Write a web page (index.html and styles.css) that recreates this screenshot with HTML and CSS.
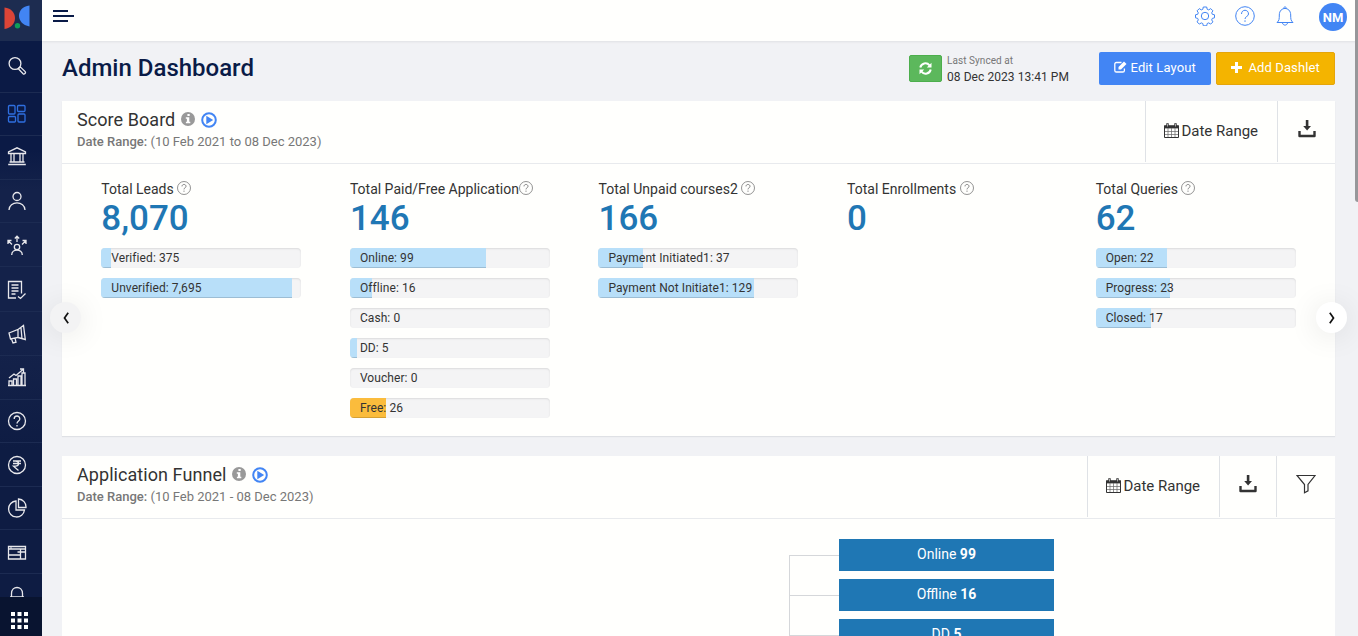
FILE: index.html
```html
<!DOCTYPE html>
<html lang="en">
  <head>
    <meta charset="utf-8">
    <meta name="viewport" content="width=device-width, initial-scale=1">
    <link rel="stylesheet" href="styles.css">
    <title>Admin Dashboard</title>
  </head>

  <body>
    <!-- Shared icons -->
    <svg class="sprite">
      <symbol id="info" viewBox="0 0 14 14">
        <circle cx="7" cy="7" r="7" fill="#999"/>
        <path d="M6.4 2.1h2.3v2H6.4zM4.8 5.3h3.5v4.5h1v1.5H4.9V9.800h1V6.800H4.8z" fill="#fff"/>
      </symbol>
      <symbol id="play" viewBox="0 0 16 16">
        <circle cx="8" cy="8" r="6.8" fill="none" stroke="#4285f4" stroke-width="2"/>
        <path d="M5.3 3.8L12.2 8l-6.9 4.2z" fill="#4285f4"/>
      </symbol>
      <symbol id="help" viewBox="0 0 14 14">
        <circle cx="7" cy="7" r="6.500" fill="none" stroke="#777" stroke-width=".8"/>
        <path d="M5 5.400c0-2.600 4-2.600 4 0C9 6.800 7 6.700 7 8.400M7 9.600v1.200" fill="none" stroke="#777" stroke-width=".9"/>
      </symbol>
      <symbol id="calendar" viewBox="0 0 15 15">
        <path d="M.5 3h14v11.5H.5z" fill="none" stroke="#333"/>
        <path d="M0 2.4h15v3H0z" fill="#333"/>
        <path d="M3.5.3v3.5M11.5.3v3.5" stroke="#333" stroke-width="2.4"/>
        <path d="M3.5 1v2.5M11.5 1v2.5" stroke="#ddd" stroke-width=".7"/>
        <path d="M4 5v9M7.5 5v9M11 5v9M1 8.5h13M1 11.5h13" stroke="#666" stroke-width=".7"/>
      </symbol>
      <symbol id="download" viewBox="0 0 18 18">
        <path d="M1.5 11v5h15v-5" fill="none" stroke="#333" stroke-width="2.4" stroke-linejoin="round"/>
        <path d="M7.8 0h2.6v6h2.6l-3.9 4.6L5.2 6h2.6z" fill="#333"/>
      </symbol>
    </svg>

    <aside class="sidebar">
      <div class="logo">
        <svg width="26" height="25" viewBox="0 0 26 25">
          <path d="M.5 2.500C14.500 4 14.500 22 .5 24z" fill="#db4437"/>
          <path d="M25.500.5C11.500 2 11.500 19 25.500 21.500z" fill="#4285f4"/>
          <circle cx="13.500" cy="20.700" r="2.700" fill="#0f9d58"/>
        </svg>
      </div>
      <nav class="menu">
        <a class="search"><svg class="icon" viewBox="0 0 20 20"><circle cx="8" cy="7.500" r="5.900"/><path d="M12 12l1.200-1.100 5 4.700c1.100 1.200-.9 3.200-2.100 2.100l-4.800-5z"/></svg></a>
        <a class="active"><svg class="icon" viewBox="0 0 20 20"><rect x="1.500" y="1.500" width="6.500" height="8.500" rx="1"/><rect x="10.500" y="1.500" width="7.500" height="6" rx="1"/><rect x="1.500" y="12.500" width="7" height="5.500" rx="1"/><rect x="11" y="10" width="7" height="8" rx="1"/></svg></a>
        <a><svg class="icon" viewBox="0 0 20 20"><path d="M1.500 6.500V5L10 .8 18.500 5v1.500zM4 6.500V15M7 6.500V15M13 6.500V15M16 6.500V15M2.500 15h15M1.200 17.500h17.600"/></svg></a>
        <a><svg class="icon" viewBox="0 0 20 20"><circle cx="10" cy="5.500" r="4"/><path d="M2 19c0-9.500 16-9.500 16 0"/></svg></a>
        <a><svg class="icon" viewBox="0 0 20 20"><circle cx="10" cy="12" r="2.700"/><path d="M4.700 20c0-6.500 10.600-6.500 10.600 0M10 7V1.500M7.800 3.500L10 1.200l2.200 2.300M5 9.500L1 5.500M1 9V5.500h3.500M15 9.500l4-4M15.500 5.500H19V9"/></svg></a>
        <a class="lower"><svg class="icon" viewBox="0 0 20 20"><path d="M9 18H1.500V1.500h13v12M4.500 5h7M4.500 8h7M4.500 11h7M4.500 14h4M11 16.500l2.500 2 5-5"/></svg></a>
        <a><svg class="icon" viewBox="0 0 20 20"><path d="M2 9l9-3.500v8L3.500 15zM11 5.500L16.500 1.500l1.800 14L11 13.500M14 4l1 10.500M4.500 15l1.500 4 3-.8L8 14"/></svg></a>
        <a><svg class="icon" viewBox="0 0 20 20"><path d="M2 18v-4h3v4M6.500 18v-6h3v6M11 18V9h3v9M15 18V6h3v12M1 18.500h18M2 11l5-4 2 1.500 7-6M13 2h3.500v3.500"/></svg></a>
        <a><svg class="icon" viewBox="0 0 20 20"><circle cx="10" cy="10" r="8.500"/><path d="M7.200 8c0-4 5.600-4 5.600 0 0 2-2.800 2-2.800 4.500M10 14v1.500"/></svg></a>
        <a><svg class="icon" viewBox="0 0 20 20"><circle cx="10" cy="10" r="8.500"/><path d="M6 6h8M6 8.500h8M6 6h2.500c4 0 4 5.200 0 5.200H6.500l5 4.300"/></svg></a>
        <a><svg class="icon" viewBox="0 0 20 20"><path d="M9 3a8 8 0 1 0 8.500 9H9zM11.500 1v8.500H19A8 8 0 0 0 11.500 1z"/></svg></a>
        <a><svg class="icon" viewBox="0 0 20 20"><path d="M1.500 4.500h17v12.500h-17zM1.500 7h17M13.500 7v10M1.500 13h12M3.500 5.800h1M10.500 10h8"/></svg></a>
        <a><svg class="icon" viewBox="0 0 20 20"><path d="M4.500 12V8.500c0-8 11-8 11 0V12M3 12h14"/></svg></a>
      </nav>
      <div class="apps">
        <svg width="17" height="17" viewBox="0 0 17 17"><path d="M0 2h17M0 8.500h17M0 15h17" stroke="#fff" stroke-width="4" stroke-dasharray="4 2.500"/></svg>
      </div>
    </aside>

    <div class="page">
      <header class="topbar">
        <svg class="burger" width="22" height="12" viewBox="0 0 22 12"><path d="M0 1h15M0 6h21M0 11h15" stroke="#0a1b47" stroke-width="2"/></svg>
        <div class="tools">
          <svg class="tool" viewBox="0 0 20 20"><circle cx="10" cy="10" r="3.700"/><path d="M8.300 1h3.400l.5 2.300 1.500.6 2-1.300 2.200 2.200-1.200 2 .6 1.500 2.200.5v3l-2.200.6-.6 1.500 1.200 2-2.200 2.200-2-1.200-1.500.6-.5 2.300H8.300l-.5-2.300-1.500-.6-2 1.200-2.200-2.200 1.200-2-.6-1.500-2.200-.6v-3l2.200-.5.6-1.500-1.200-2 2.200-2.200 2 1.300 1.500-.6z"/></svg>
          <svg class="tool" viewBox="0 0 20 20"><circle cx="10" cy="10" r="9.300"/><path d="M6.500 8c0-5 7-5 7 0 0 2.500-3.500 2.300-3.500 5M10 14.300v1.600"/></svg>
          <svg class="tool" viewBox="0 0 20 20"><path d="M8.700 2.500c0-2.200 2.600-2.200 2.600 0M2 16.500c2.300-2 2.300-3.500 2.300-7.500 0-8.700 11.400-8.700 11.400 0 0 4 0 5.500 2.300 7.500zM7.500 17c.5 2.800 4.500 2.800 5 0"/></svg>
          <span class="avatar">NM</span>
        </div>
      </header>

      <div class="titlebar">
        <h1>Admin Dashboard</h1>
        <button class="sync">
          <svg width="13" height="13" viewBox="0 0 13 13"><path d="M1.300 5.500A5.200 5.200 0 0 1 10.500 3.300M11.700 7.500A5.200 5.200 0 0 1 2.500 9.700" fill="none" stroke="#fff" stroke-width="2"/><path d="M12.500.8v4.700H7.800zM.5 12.200V7.500h4.700z" fill="#fff"/></svg>
        </button>
        <div class="synced">
          <small>Last Synced at</small>
          <span>08 Dec 2023 13:41 PM</span>
        </div>
        <button class="btn blue">
          <svg width="13" height="12" viewBox="0 0 13 12"><path d="M7.500 1.500H2.400Q.8 1.500.8 3v6.400q0 1.600 1.600 1.600h6.400q1.600 0 1.600-1.600V7.500" fill="none" stroke="#fff" stroke-width="1.300"/><path d="M4.500 6L10 .5 12.500 3 7 8.500H4.500z" fill="#fff"/></svg>
          Edit Layout
        </button>
        <button class="btn yellow">
          <svg width="11" height="11" viewBox="0 0 11 11"><path d="M5.500 0v11M0 5.500h11" stroke="#fff" stroke-width="3"/></svg>
          Add Dashlet
        </button>
      </div>

      <section class="card scoreboard">
        <div class="cardHead">
          <div class="cardTitle">
            <h2>Score Board <svg class="info"><use href="#info"/></svg><svg class="play"><use href="#play"/></svg></h2>
            <p><b>Date Range:</b> (10 Feb 2021 to 08 Dec 2023)</p>
          </div>
          <div class="range"><svg class="cal"><use href="#calendar"/></svg>Date Range</div>
          <div class="action"><svg class="dl"><use href="#download"/></svg></div>
        </div>
        <div class="scores">
          <div class="score">
            <h3>Total Leads <svg><use href="#help"/></svg></h3>
            <strong>8,070</strong>
            <div class="bar"><i style="width: 5%"></i><span>Verified: 375</span></div>
            <div class="bar"><i style="width: 95.5%"></i><span>Unverified: 7,695</span></div>
          </div>
          <div class="score">
            <h3>Total Paid/Free Application<svg><use href="#help"/></svg></h3>
            <strong>146</strong>
            <div class="bar"><i style="width: 68%"></i><span>Online: 99</span></div>
            <div class="bar"><i style="width: 11%"></i><span>Offline: 16</span></div>
            <div class="bar"><span>Cash: 0</span></div>
            <div class="bar"><i style="width: 3.5%"></i><span>DD: 5</span></div>
            <div class="bar"><span>Voucher: 0</span></div>
            <div class="bar free"><i style="width: 18%"></i><span>Free: 26</span></div>
          </div>
          <div class="score">
            <h3>Total Unpaid courses2 <svg><use href="#help"/></svg></h3>
            <strong>166</strong>
            <div class="bar"><i style="width: 22.5%"></i><span>Payment Initiated1: 37</span></div>
            <div class="bar"><i style="width: 78%"></i><span>Payment Not Initiate1: 129</span></div>
          </div>
          <div class="score">
            <h3>Total Enrollments <svg><use href="#help"/></svg></h3>
            <strong>0</strong>
          </div>
          <div class="score">
            <h3>Total Queries <svg><use href="#help"/></svg></h3>
            <strong>62</strong>
            <div class="bar"><i style="width: 35.5%"></i><span>Open: 22</span></div>
            <div class="bar"><i style="width: 37%"></i><span>Progress: 23</span></div>
            <div class="bar"><i style="width: 27.5%"></i><span>Closed: 17</span></div>
          </div>
        </div>
        <button class="arrow prev"><svg width="8" height="12" viewBox="0 0 8 12"><path d="M6.200.8L2.500 6l3.700 5.200" fill="none" stroke="#111" stroke-width="1.700"/></svg></button>
        <button class="arrow next"><svg width="8" height="12" viewBox="0 0 8 12"><path d="M1.800.8L5.500 6l-3.700 5.200" fill="none" stroke="#111" stroke-width="1.700"/></svg></button>
      </section>

      <section class="card">
        <div class="cardHead">
          <div class="cardTitle">
            <h2>Application Funnel <svg class="info"><use href="#info"/></svg><svg class="play"><use href="#play"/></svg></h2>
            <p><b>Date Range:</b> (10 Feb 2021 - 08 Dec 2023)</p>
          </div>
          <div class="range"><svg class="cal"><use href="#calendar"/></svg>Date Range</div>
          <div class="action narrow"><svg class="dl"><use href="#download"/></svg></div>
          <div class="action wide"><svg class="filter" viewBox="0 0 20 20"><path d="M1 1.500h18l-7 9v6.300l-3.500 2v-8.300z" fill="none" stroke="#333" stroke-width="1.200"/></svg></div>
        </div>
        <div class="funnel">
          <div class="step"><span class="branch"></span><div>Online <b>99</b></div></div>
          <div class="step"><span class="branch"></span><div>Offline <b>16</b></div></div>
          <div class="step"><span class="branch"></span><div>DD <b>5</b></div></div>
        </div>
      </section>
    </div>

    <div class="scrollbar"></div>
  </body>
</html>
```

FILE: styles.css
```css
* {box-sizing: border-box;}

body {
  display: flex;
  height: 636px;
  margin: 0;
  overflow: hidden;
  background: #f1f2f5;
  color: #333;
  font-family: Roboto, Arial, sans-serif;
}

h1, h2, h3, p {margin: 0;}

button {
  border: none;
  padding: 0;
  font-family: inherit;
  cursor: pointer;
}

.sprite {
  position: absolute;
  width: 0;
  height: 0;
}

/* Sidebar */
.sidebar {
  position: relative;
  z-index: 1;
  display: flex;
  flex-direction: column;
  width: 42px;
  flex: none;
  background: linear-gradient(#0b1a45 0 150px, #14224a 190px, #14224a 350px, #0e1c43 450px);
  color: #e8e8ec;
}

.logo {
  height: 41px;
  flex: none;
  padding: 5px 4px;
  background: #1d2c50;
}

.menu {
  flex: 1;
  min-height: 0;
  overflow: hidden;
}
.menu a {
  display: flex;
  align-items: center;
  height: 43.6px;
  padding-left: 7px;
  border-bottom: 1px solid #1c2b52;
}
.menu .search {height: 51.5px;}
.menu .active {color: #2f6fe0;}
.menu .lower {margin-top: 2px;}

.icon {
  width: 20px;
  height: 20px;
  fill: none;
  stroke: currentColor;
  stroke-width: 1.3;
}

.apps {
  height: 39px;
  flex: none;
  padding: 15px 0 0 10.5px;
  background: #091430;
}

/* Header */
.page {
  flex: 1;
  min-width: 0;
}

.topbar {
  display: flex;
  justify-content: space-between;
  height: 41px;
  padding: 0 14px 0 11px;
  background: #fffffd;
  box-shadow: 0 1px 2px #dfe1e3;
}
.burger {margin-top: 10px;}

.tools {
  display: flex;
  gap: 20px;
  padding-top: 6px;
}
.tool {
  width: 20px;
  height: 20px;
  fill: none;
  stroke: #4285f4;
  stroke-width: 1;
}
.avatar {
  width: 28px;
  height: 28px;
  margin: -3px -3px 0 4px;
  border-radius: 50%;
  background: #4285f4;
  color: #fff;
  font-size: 13px;
  font-weight: 700;
  line-height: 29px;
  text-align: center;
}

.titlebar {
  display: flex;
  height: 60px;
  padding: 11px 23px 0 20px;
}
.titlebar h1 {
  flex: 1;
  color: #0a1b47;
  font-size: 24px;
  font-weight: 500;
  line-height: 32px;
}

.sync {
  width: 33px;
  height: 27px;
  margin-top: 3px;
  border: 1px solid #4cae4c;
  border-radius: 2px;
  background: #5cb85c;
}
.sync svg {vertical-align: -2px;}

.synced {
  width: 157px;
  padding: 1px 0 0 5px;
  font-size: 12px;
  line-height: 18px;
  letter-spacing: 0.06px;
}
.synced small {
  display: block;
  color: #777;
  font-size: 10px;
  line-height: 15px;
}

.btn {
  height: 33px;
  padding-bottom: 2px;
  border-radius: 2px;
  color: #fff;
  font-size: 13px;
  font-weight: 400;
  letter-spacing: 0.1px;
}
.btn svg {vertical-align: -1px;}
.blue {
  width: 112px;
  margin-right: 5px;
  background: #4285f4;
}
.yellow {
  width: 119px;
  border: 1px solid #e5a50a;
  background: #f4b400;
}
.yellow svg {margin-right: 3px;}

/* Cards */
.card {
  position: relative;
  width: 1273px;
  margin-left: 20px;
  background: #fffffd;
}
.scoreboard {
  height: 335px;
  margin-bottom: 20px;
  box-shadow: 0 1px 1px #dfe1e5;
}

.cardHead {
  display: flex;
  height: 63px;
  border-bottom: 1px solid #e8eaed;
}
.cardTitle {
  flex: 1;
  padding: 8px 0 0 15px;
}
.cardTitle h2 {
  display: flex;
  align-items: center;
  font-size: 18px;
  font-weight: 400;
  line-height: 22px;
  letter-spacing: 0.06px;
}
.cardTitle p {
  color: #777;
  font-size: 13px;
  line-height: 22px;
}
.cardTitle b {font-weight: 500;}

.info {
  width: 14px;
  height: 14px;
  margin: -2px 6px 0 6px;
}
.play {
  width: 16px;
  height: 16px;
  margin-top: -1px;
}

.range, .action {
  display: flex;
  align-items: center;
  justify-content: center;
  width: 132px;
  height: 61px;
  padding: 0 1px 2px 0;
  border-left: 1px solid #dfe2e6;
  font-size: 15px;
}
.action {
  width: 58px;
  padding-right: 0;
}
.action.narrow {width: 57px;}
.action.wide {width: 59px;}
.cal {
  width: 15px;
  height: 15px;
  margin-right: 2.5px;
}
.dl {
  width: 18px;
  height: 18px;
  margin-top: -3px;
}
.filter {
  width: 20px;
  height: 20px;
  margin-top: -4px;
}

/* Score board */
.scores {
  display: grid;
  grid-template-columns: repeat(5, 248.6px);
  padding: 14px 0 0 39.3px;
}
.score h3 {
  display: flex;
  font-size: 14px;
  font-weight: 400;
  line-height: 22px;
  white-space: pre;
}
.score h3 svg {
  width: 14px;
  height: 14px;
  margin-top: 3px;
}
.score strong {
  display: block;
  height: 48px;
  color: #1f77b4;
  font-size: 35px;
  font-weight: 500;
  line-height: 37px;
}

.bar {
  position: relative;
  width: 200px;
  height: 20px;
  margin-bottom: 10px;
  overflow: hidden;
  border-radius: 4px;
  background: #f4f4f5;
  box-shadow: inset 0 1px 2px rgba(0, 0, 0, 0.1);
  font-size: 12px;
  letter-spacing: 0.08px;
  line-height: 20px;
}
.bar i {
  display: block;
  height: 20px;
  background: #b8dff9;
  box-shadow: inset 0 -1px 0 rgba(0, 0, 0, 0.15);
}
.bar span {
  position: absolute;
  top: 0;
  left: 10px;
}
.bar.free i {background: #fbbc3c;}

.arrow {
  position: absolute;
  top: 201px;
  width: 31px;
  height: 31px;
  border-radius: 50%;
  background: #fff;
  box-shadow: 0 3px 30px rgba(0, 0, 0, 0.1);
}
.arrow svg {vertical-align: -2px;}
.prev {
  left: -12px;
  background: #f3f3f4;
}
.next {right: -12px;}

/* Funnel */
.funnel {
  height: 117px;
  padding: 20px 0 0 727px;
  overflow: hidden;
}

.step {
  display: flex;
  height: 40px;
}
.branch {
  width: 50px;
  height: 40px;
  margin-top: 16px;
  border-top: 1px solid #d5d7da;
  border-left: 1px solid #d5d7da;
}
.step div {
  width: 215px;
  height: 32px;
  background: #1f77b4;
  color: #fff;
  font-size: 14px;
  line-height: 30px;
  text-align: center;
}

.scrollbar {
  position: absolute;
  top: 0;
  right: 0;
  width: 3px;
  height: 202px;
  border-radius: 0 0 0 3px;
  background: #97979a;
}
```
